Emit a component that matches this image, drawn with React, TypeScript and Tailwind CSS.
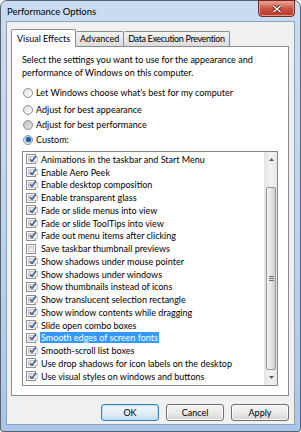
import React from "react";

// Windows 7 "Performance Options" dialog, Visual Effects tab

const effects: [string, boolean][] = [
  ["Animations in the taskbar and Start Menu", true],
  ["Enable Aero Peek", true],
  ["Enable desktop composition", true],
  ["Enable transparent glass", true],
  ["Fade or slide menus into view", true],
  ["Fade or slide ToolTips into view", true],
  ["Fade out menu items after clicking", true],
  ["Save taskbar thumbnail previews", false],
  ["Show shadows under mouse pointer", true],
  ["Show shadows under windows", true],
  ["Show thumbnails instead of icons", true],
  ["Show translucent selection rectangle", true],
  ["Show window contents while dragging", true],
  ["Slide open combo boxes", true],
  ["Smooth edges of screen fonts", true],
  ["Smooth-scroll list boxes", true],
  ["Use drop shadows for icon labels on the desktop", true],
  ["Use visual styles on windows and buttons", true],
];

const Check = ({ on }: { on: boolean }) => (
  <span className="w-[10px] h-[10px] shrink-0 border border-[#8e8f8f] bg-white p-px flex">
    <span className="flex-1 flex items-center justify-center bg-gradient-to-br from-[#d8d8d8] to-[#f8f8f8] border border-[#c8c8c8]">
      {on && (
        <svg width="8" height="8" viewBox="0 0 8 8" className="-mt-px">
          <path d="M1 4.2 L3 6.4 L7 1" fill="none" stroke="#3a5a93" strokeWidth="1.5" />
        </svg>
      )}
    </span>
  </span>
);

const Radio = ({ on, dim }: { on?: boolean; dim?: boolean }) => (
  <span
    className={`w-[10px] h-[10px] shrink-0 rounded-full border border-[#8f8f8f] flex items-center justify-center ${
      dim ? "bg-gradient-to-br from-[#bdbdbd] to-[#e6e6e6]" : "bg-gradient-to-br from-[#dedede] to-[#ffffff]"
    }`}
  >
    {on && <span className="w-[5px] h-[5px] rounded-full bg-[#1b5c9a] shadow-[0_0_1px_1px_#8cc0ea]" />}
  </span>
);

const Btn = ({ label, primary }: { label: string; primary?: boolean }) => (
  <button
    className={`w-[58px] h-[17px] rounded-[3px] border text-[9px] leading-none flex items-center justify-center text-black ${
      primary
        ? "border-[#3c7fb1] bg-gradient-to-b from-[#eef6fb] via-[#e3eef7] to-[#c6dcec] shadow-[inset_0_0_0_1px_#b8e0f8]"
        : "border-[#707070] bg-gradient-to-b from-[#f2f2f2] via-[#ebebeb] to-[#d4d4d4] shadow-[inset_0_0_0_1px_#fcfcfc]"
    }`}
  >
    {label}
  </button>
);

const Arrow = ({ up }: { up?: boolean }) => (
  <div className="h-[15px] flex items-center justify-center">
    <svg width="5" height="3" viewBox="0 0 5 3">
      <path d={up ? "M0 3 L2.5 0 L5 3 Z" : "M0 0 L2.5 3 L5 0 Z"} fill="#5a5a5a" />
    </svg>
  </div>
);

export default function App() {
  return (
    <div
      className="w-[301px] h-[432px] flex flex-col rounded-t-[7px] rounded-b-[3px] border border-[#59626e] bg-gradient-to-b from-[#c9dcf1] via-[#bdd4ee] to-[#a9c6e8] text-black"
      style={{ fontFamily: '"Segoe UI", Lato, "Noto Sans", sans-serif' }}
    >
      {/* title bar */}
      <div className="h-[20px] flex items-start justify-between pl-[6px] pr-[5px]">
        <span className="text-[9.5px] leading-none mt-[6px]">Performance Options</span>
        <div className="w-[37px] h-[17px] -mt-px rounded-b-[4px] border border-[#6b2a24] bg-gradient-to-b from-[#e9a99b] via-[#c95443] to-[#b8382a] flex items-center justify-center shadow-[inset_0_0_0_1px_#e8978a]">
          <svg width="10" height="8" viewBox="0 0 10 8">
            <path d="M1.5 1 L8.5 7 M8.5 1 L1.5 7" stroke="#5a1c16" strokeWidth="3" />
            <path d="M1.5 1 L8.5 7 M8.5 1 L1.5 7" stroke="#ffffff" strokeWidth="1.6" />
          </svg>
        </div>
      </div>

      {/* client area */}
      <div className="flex-1 mx-[5px] mb-[6px] border border-[#8da2bb] bg-[#f0f0f0] pl-[4px] pr-[5px] pt-[7px] flex flex-col text-[9px]">
        {/* tabs */}
        <div className="flex items-end h-[17px] relative z-10">
          <div className="h-[18px] -mb-px px-[5px] border border-b-0 border-[#898c95] bg-white flex items-center rounded-t-[2px]">
            Visual Effects
          </div>
          <div className="h-[15px] px-[4px] border border-b-0 border-l-0 border-[#898c95] bg-gradient-to-b from-[#f4f4f4] to-[#dcdcdc] flex items-center rounded-t-[2px]">
            Advanced
          </div>
          <div className="h-[15px] px-[4px] tracking-[-0.35px] border border-b-0 border-l-0 border-[#898c95] bg-gradient-to-b from-[#f4f4f4] to-[#dcdcdc] flex items-center rounded-t-[2px]">
            Data Execution Prevention
          </div>
        </div>

        {/* tab panel */}
        <div className="h-[350px] border border-[#898c95] bg-white pl-[10px] pt-[6px] flex flex-col">
          <p className="leading-[13px]">
            Select the settings you want to use for the appearance and
            <br />
            performance of Windows on this computer.
          </p>

          <div className="mt-[6px] flex flex-col">
            <div className="h-[15px] mb-[2px] flex items-center gap-[3px] pl-[1px]">
              <Radio />
              <span>Let Windows choose what's best for my computer</span>
            </div>
            <div className="h-[15px] flex items-center gap-[3px] pl-[1px]">
              <Radio />
              <span>Adjust for best appearance</span>
            </div>
            <div className="h-[15px] flex items-center gap-[3px] pl-[1px]">
              <Radio dim />
              <span>Adjust for best performance</span>
            </div>
            <div className="h-[15px] flex items-center gap-[3px] pl-[1px]">
              <Radio on />
              <span>Custom:</span>
            </div>
          </div>

          {/* effects list */}
          <div className="mt-[4px] w-[256px] h-[235px] border border-[#828790] bg-white flex">
            <div className="flex-1 flex flex-col pl-[3px] pt-[1px] overflow-hidden">
              {effects.map(([label, on], i) => (
                <div key={label} className="h-[12.75px] shrink-0 flex items-center gap-[4px] whitespace-nowrap">
                  <Check on={on} />
                  <span
                    className={`leading-[11px] px-px ${i === 14 ? "bg-[#3399ff] text-white" : ""}`}
                  >
                    {label}
                  </span>
                </div>
              ))}
            </div>

            {/* scrollbar */}
            <div className="w-[13px] flex flex-col bg-gradient-to-r from-[#e6e6e6] via-[#f2f2f2] to-[#e6e6e6] border-l border-[#e4e4e4]">
              <Arrow up />
              <div className="flex-1 flex flex-col pt-[20px]">
                <div className="flex-1 mx-px rounded-[2px] border border-[#979797] bg-gradient-to-r from-[#f3f3f3] via-[#e6e6e6] to-[#cfcfcf] flex items-center justify-center">
                  <div className="flex flex-col gap-px">
                    <span className="block w-[5px] h-px bg-[#6e6e6e]" />
                    <span className="block w-[5px] h-px bg-[#6e6e6e]" />
                    <span className="block w-[5px] h-px bg-[#6e6e6e]" />
                  </div>
                </div>
              </div>
              <Arrow />
            </div>
          </div>
        </div>

        {/* buttons */}
        <div className="mt-[8px] flex justify-end gap-[7px]">
          <Btn label="OK" primary />
          <Btn label="Cancel" />
          <Btn label="Apply" />
        </div>
      </div>
    </div>
  );
}
